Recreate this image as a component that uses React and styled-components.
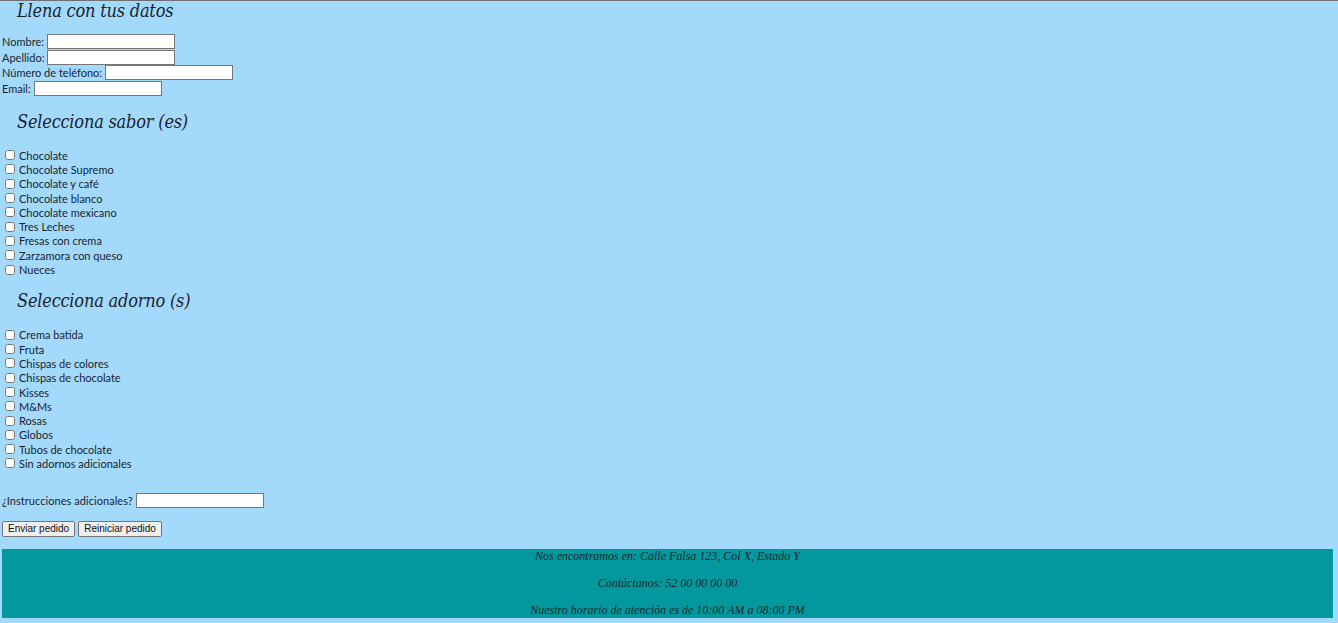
import React from "react";
import styled, { createGlobalStyle } from "styled-components";

const GlobalStyle = createGlobalStyle`
  html, body {
    margin: 0;
    padding: 0;
    background: #a3dafb;
  }
  body {
    font-family: "Lato", "Open Sans", sans-serif;
    color: #1b2330;
    overflow: hidden;
  }
`;

const Page = styled.div`
  border-top: 1px solid #6d6f72;
  padding: 0 2px;
  display: flex;
  flex-direction: column;
  height: 622px;
  overflow: hidden;
`;

const Heading = styled.h2`
  margin: ${(p) => p.$top}px 0 ${(p) => p.$bottom}px 0;
  padding-left: 15px;
  font-family: "DejaVu Serif Condensed", "Liberation Serif", serif;
  font-style: italic;
  font-weight: normal;
  font-size: 18px;
  line-height: 24px;
  letter-spacing: -0.2px;
  color: #1c2230;
`;

const Field = styled.label`
  display: flex;
  align-items: center;
  height: 15.5px;
  font-size: 11px;
`;

const TextInput = styled.input`
  box-sizing: border-box;
  width: 128px;
  height: 15px;
  margin: 0 0 0 3px;
  padding: 0 2px;
  border: 1px solid #767676;
  background: #fff;
  font-size: 10px;
`;

const CheckRow = styled.label`
  display: flex;
  align-items: center;
  height: 14.3px;
  font-size: 11px;
`;

const Box = styled.input`
  width: 10px;
  height: 10px;
  margin: 0 4px 0 3px;
`;

const Extra = styled(Field)`
  margin-top: 22px;
  letter-spacing: 0.05px;
`;

const Buttons = styled.div`
  display: flex;
  gap: 3px;
  margin-top: 12.5px;
`;

const Button = styled.button`
  box-sizing: border-box;
  height: 16px;
  padding: 0 5px;
  border: 1px solid #767676;
  border-radius: 2px;
  background: #efefef;
  font-family: "Liberation Sans", Arial, sans-serif;
  font-size: 10px;
  color: #111;
`;

const Footer = styled.footer`
  margin-top: 12px;
  width: 1331px;
  background: #03989e;
  display: flex;
  flex-direction: column;
  gap: 13px;
  padding-bottom: 1px;
`;

const FooterLine = styled.p`
  margin: 0;
  text-align: center;
  font-family: "Liberation Serif", "Times New Roman", serif;
  font-style: italic;
  font-size: 12px;
  line-height: 14px;
  color: #1a2a2c;
`;

const sabores = [
  "Chocolate",
  "Chocolate Supremo",
  "Chocolate y café",
  "Chocolate blanco",
  "Chocolate mexicano",
  "Tres Leches",
  "Fresas con crema",
  "Zarzamora con queso",
  "Nueces",
];

const adornos = [
  "Crema batida",
  "Fruta",
  "Chispas de colores",
  "Chispas de chocolate",
  "Kisses",
  "M&Ms",
  "Rosas",
  "Globos",
  "Tubos de chocolate",
  "Sin adornos adicionales",
];

const App = () => {
  return (
    <>
      <GlobalStyle />
      <Page>
        <Heading $top={-2} $bottom={11}>
          Llena con tus datos
        </Heading>
        <Field>
          Nombre: <TextInput type="text" />
        </Field>
        <Field>
          Apellido: <TextInput type="text" />
        </Field>
        <Field>
          Número de teléfono: <TextInput type="text" />
        </Field>
        <Field>
          Email: <TextInput type="text" />
        </Field>

        <Heading $top={14} $bottom={14}>
          Selecciona sabor (es)
        </Heading>
        {sabores.map((s) => (
          <CheckRow key={s}>
            <Box type="checkbox" />
            {s}
          </CheckRow>
        ))}

        <Heading $top={12} $bottom={15}>
          Selecciona adorno (s)
        </Heading>
        {adornos.map((a) => (
          <CheckRow key={a}>
            <Box type="checkbox" />
            {a}
          </CheckRow>
        ))}

        <Extra>
          ¿Instrucciones adicionales? <TextInput type="text" />
        </Extra>
        <Buttons>
          <Button type="submit">Enviar pedido</Button>
          <Button type="reset">Reiniciar pedido</Button>
        </Buttons>

        <Footer>
          <FooterLine>Nos encontramos en: Calle Falsa 123, Col X, Estado Y</FooterLine>
          <FooterLine>Contáctanos: 52 00 00 00 00</FooterLine>
          <FooterLine>Nuestro horario de atención es de 10:00 AM a 08:00 PM</FooterLine>
        </Footer>
      </Page>
    </>
  );
};

export default App;
